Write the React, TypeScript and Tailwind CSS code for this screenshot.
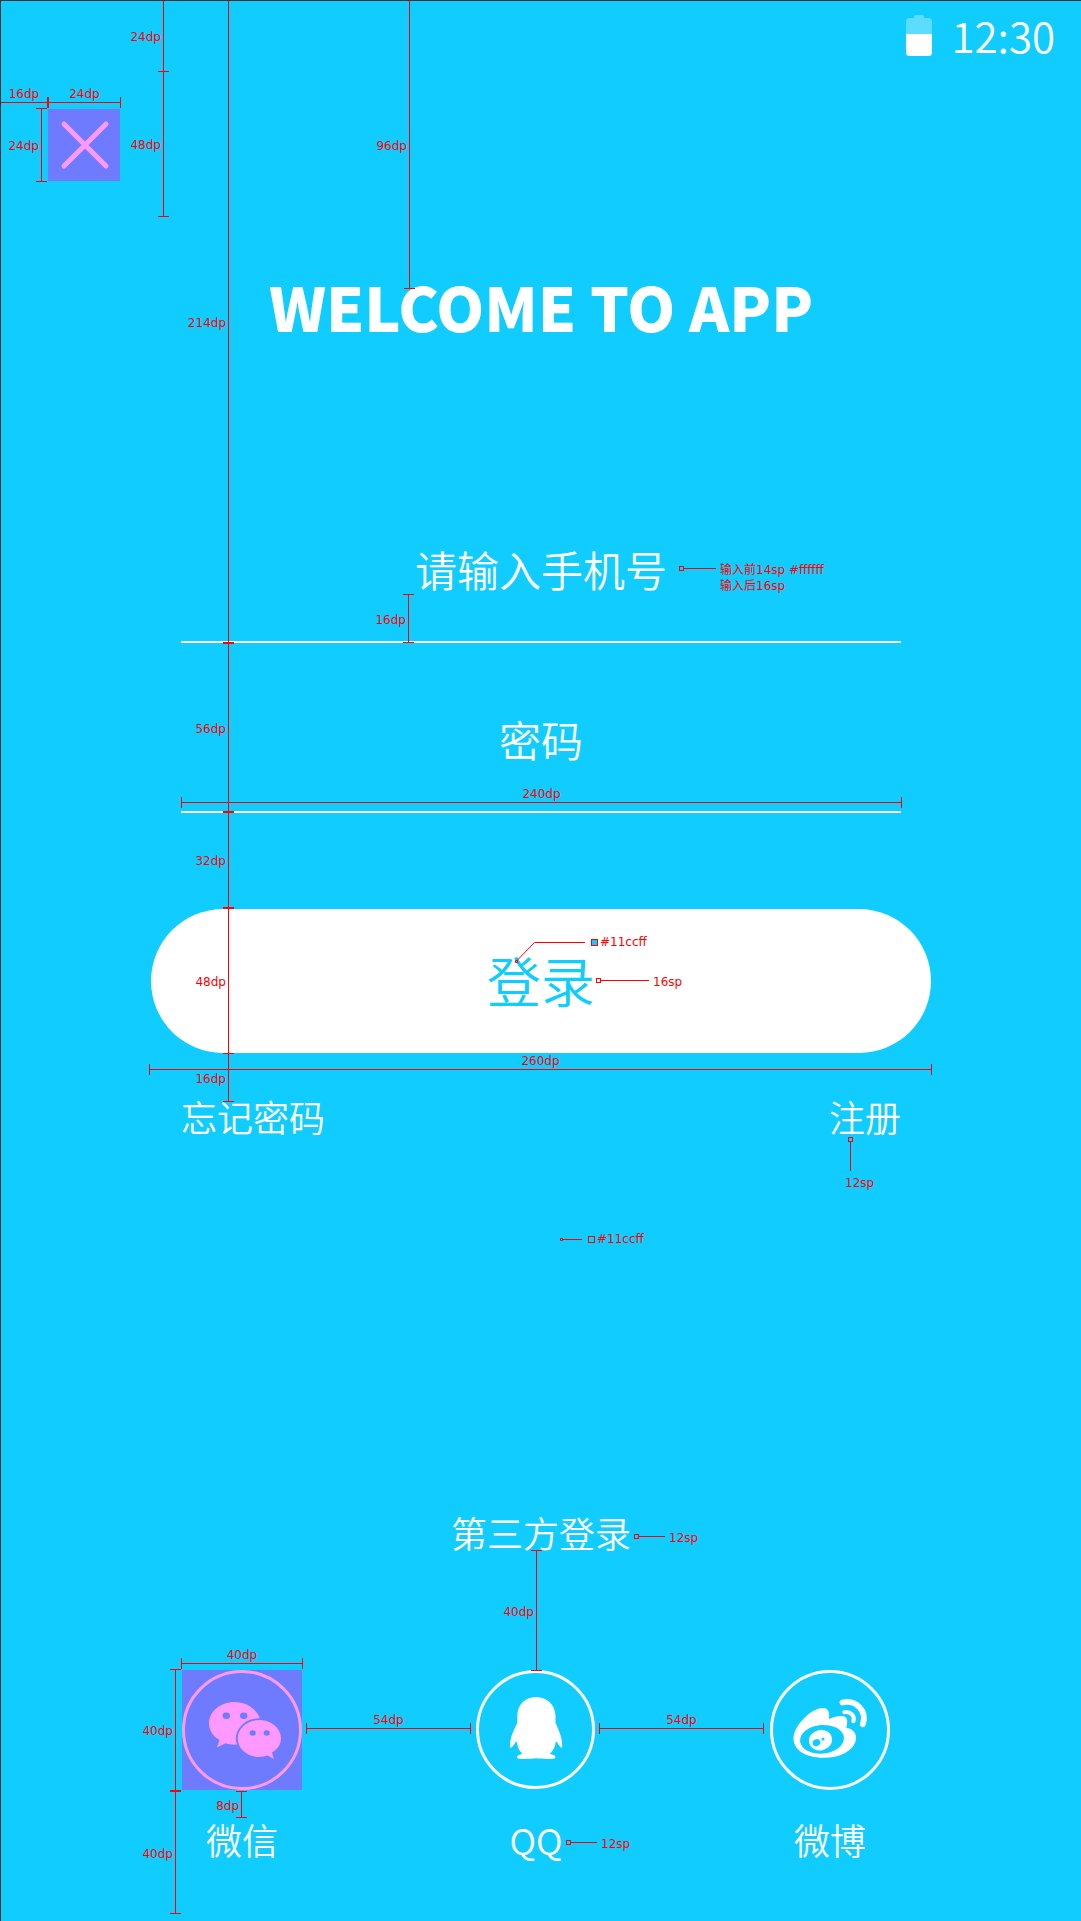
import type { ReactNode } from "react";

type SpanProps = { place: string; label: string };

/** Vertical measure with end ticks and its label on the left. */
function VSpan({ place, label }: SpanProps) {
  return (
    <div className={`absolute flex w-[11px] items-center justify-center border-y border-[#f00] ${place}`}>
      <span className="h-full w-px bg-[#f00]" />
      <span className="absolute right-2 pt-0.5">{label}</span>
    </div>
  );
}

/** Horizontal measure with end ticks and its label above. */
function HSpan({ place, label }: SpanProps) {
  return (
    <div className={`absolute flex h-[11px] items-center justify-center border-x border-[#f00] ${place}`}>
      <span className="h-px w-full bg-[#f00]" />
      <span className="absolute bottom-1.5">{label}</span>
    </div>
  );
}

/** Note tied to an element by a small square and a leader line. */
function Note({ place, line, dot = "", children }: { place: string; line: string; dot?: string; children: ReactNode }) {
  return (
    <div className={`absolute flex items-start ${place}`}>
      <span className={`size-[5px] shrink-0 border border-[#f00] ${dot}`} />
      <span className={`mt-0.5 h-px shrink-0 bg-[#f00] ${line}`} />
      <span className="-mt-1 ml-1">{children}</span>
    </div>
  );
}

function Swatch({ place, children }: { place: string; children: ReactNode }) {
  return (
    <div className={`absolute flex items-center gap-0.5 ${place}`}>
      <span className="size-[7px] border border-[#f00] bg-[#11ccff]" />
      <span>{children}</span>
    </div>
  );
}

function Specs() {
  return (
    <div
      aria-hidden="true"
      className="pointer-events-none absolute inset-0 -top-px text-[12px] leading-4 font-normal whitespace-nowrap text-[#f00] [font-family:'DejaVu_Sans','Noto_Sans_CJK_SC',sans-serif]"
    >
      <div className="absolute inset-y-0 -left-px">
        <VSpan place="left-[158px] top-0 h-[72px]" label="24dp" />
        <VSpan place="left-[158px] top-[71px] h-[146px]" label="48dp" />
        <VSpan place="left-[36px] top-[108px] h-[74px]" label="24dp" />
        <HSpan place="left-0 top-[97px] w-[48px]" label="16dp" />
        <HSpan place="left-[48px] top-[97px] w-[73px]" label="24dp" />
      </div>
      <div className="absolute inset-y-0 left-1/2 w-[720px] -translate-x-1/2">
        <VSpan place="left-[42px] top-0 h-[643px]" label="214dp" />
        <VSpan place="left-[42px] top-[643px] h-[169px]" label="56dp" />
        <VSpan place="left-[42px] top-[812px] h-[96px]" label="32dp" />
        <VSpan place="left-[42px] top-[908px] h-[146px]" label="48dp" />
        <VSpan place="left-[42px] top-[1053px] h-[49px]" label="16dp" />
        <VSpan place="left-[223px] top-0 h-[289px]" label="96dp" />
        <VSpan place="left-[222px] top-[594px] h-[49px]" label="16dp" />
        <VSpan place="-left-[11px] top-[1669px] h-[122px]" label="40dp" />
        <VSpan place="-left-[11px] top-[1791px] h-[123px]" label="40dp" />
        <VSpan place="left-[55px] top-[1791px] h-[27px]" label="8dp" />
        <VSpan place="left-[350px] top-[1550px] h-[121px]" label="40dp" />

        <HSpan place="left-0 top-[797px] w-[721px]" label="240dp" />
        <HSpan place="-left-[32px] top-[1064px] w-[783px]" label="260dp" />
        <HSpan place="left-0 top-[1658px] w-[122px]" label="40dp" />
        <HSpan place="left-[125px] top-[1723px] w-[165px]" label="54dp" />
        <HSpan place="left-[418px] top-[1723px] w-[165px]" label="54dp" />

        <Note place="left-[498px] top-[566px]" line="w-[32px]">
          输入前14sp #ffffff
          <br />
          输入后16sp
        </Note>
        <Note place="left-[415px] top-[978px]" line="w-[48px]" dot="bg-white">
          16sp
        </Note>
        <Note place="left-[453px] top-[1534px]" line="w-[26px]">
          12sp
        </Note>
        <Note place="left-[385px] top-[1840px]" line="w-[26px]">
          12sp
        </Note>
        <div className="absolute top-[1137px] left-[664px] flex flex-col items-start">
          <span className="ml-[3px] size-[5px] border border-[#f00]" />
          <span className="ml-[5px] h-[29px] w-px bg-[#f00]" />
          <span className="mt-1">12sp</span>
        </div>

        <svg className="absolute top-[940px] left-[332px]" width="76" height="26" fill="none" stroke="#f00">
          <path d="M4 20.5L21.5 2.5H72" />
          <path d="M2.5 20.5h2v2h-2z" fill="#11ccff" />
        </svg>
        <Swatch place="left-[410px] top-[934px]">#11ccff</Swatch>
        <svg className="absolute top-[1236px] left-[377px]" width="26" height="8" fill="none" stroke="#f00">
          <path d="M4 3.5H24" />
          <path d="M2.5 2.5h2v2h-2z" />
        </svg>
        <Swatch place="left-[407px] top-[1231px]">#11ccff</Swatch>
      </div>
    </div>
  );
}

function WechatIcon() {
  return (
    <svg viewBox="0 0 120 120" className="size-full" fill="#ff99ff">
      <circle cx="60" cy="60" r="58.5" fill="none" stroke="#ff99ff" strokeWidth="3" />
      <path d="M52.5 32C38.400 32 27 41.500 27 53.500C27 60.500 31 66.500 37.500 70L35 77.500L43.500 73.300C49 75 53 74.700 56 74.500L78.500 50.500C76 40 65.500 32 52.500 32Z" />
      <ellipse cx="77.300" cy="68.500" rx="23.500" ry="20.300" fill="#6f7bff" />
      <path d="M77.300 50C65.300 50 55.700 58.300 55.700 68.500S65.300 87 77.300 87C80.500 87 83.200 86.400 85.500 85.600L91.900 89L90 82.600C95.500 79.400 99 74.300 99 68.500C99 58.300 89.300 50 77.300 50Z" />
      <g fill="#6f7bff">
        <ellipse cx="44.300" cy="45.700" rx="3.700" ry="3.300" />
        <ellipse cx="61.700" cy="45.700" rx="3.700" ry="3.300" />
        <ellipse cx="70.700" cy="63" rx="3.100" ry="2.700" />
        <ellipse cx="84.700" cy="63" rx="3.100" ry="2.700" />
      </g>
    </svg>
  );
}

function QqIcon() {
  return (
    <svg viewBox="0 0 120 120" className="size-full" fill="#fff">
      <circle cx="59.500" cy="59.500" r="58" fill="none" stroke="#fff" strokeWidth="3" />
      <path d="M60 27C48.500 27 41.300 35.500 41.300 46V53C37 61 34 69 34 75C34 77.500 34.700 78.500 36 77C37.500 75.500 38.700 73.500 39.700 72H41C41.300 77 43.300 81 46.500 84C43 84.500 41 85.700 41 87C41 88.300 42.500 88.900 45 88.900C51 89 56 88.800 60 88.300C64 88.800 69 89 75 88.900C77.500 88.900 79.500 88.300 79.500 87C79.500 85.700 77.500 84.500 73.800 84C77 81 79.300 77 79.700 72H81C82 73.500 83 75.500 84.500 77C85.500 78.500 86.200 77.500 86.200 75C86.200 69 83.500 61 79.500 53V46C79.300 35.500 71.500 27 60 27Z" />
    </svg>
  );
}

function WeiboIcon() {
  return (
    <svg viewBox="0 0 120 120" className="size-full" fill="#fff">
      <circle cx="60" cy="60" r="58.500" fill="none" stroke="#fff" strokeWidth="3" />
      <path d="M23.500 67.500C23.800 59 32 49 40 43C45 39.200 50 37.800 53.500 38C58.500 38.400 59.700 42.500 59 49C64 46.500 69 45.700 72.500 46C77.500 46.800 78.300 51 76.200 57.500C82.500 59 86 62.500 86 67.500C86 74 81.500 79.500 75 83C68.500 86.500 61 87.900 53 87.800C36 87.500 23 80.500 23.500 67.500Z" />
      <ellipse cx="52" cy="69.300" rx="22" ry="14.300" fill="#11ccff" transform="rotate(-5 52 69.300)" />
      <ellipse cx="50.500" cy="70.200" rx="11.600" ry="10.300" transform="rotate(-12 50.500 70.200)" />
      <g fill="#11ccff">
        <ellipse cx="46.500" cy="72.700" rx="4" ry="3.400" transform="rotate(-25 46.500 72.700)" />
        <circle cx="53" cy="69" r="1.500" />
      </g>
      <g fill="none" stroke="#fff" strokeLinecap="round">
        <path d="M72.500 32.500C86 29.500 97.500 41 92.800 54.300" strokeWidth="5.800" />
        <path d="M74.300 42.200C80.500 41 85.500 46 83.300 51.300" strokeWidth="4" />
      </g>
    </svg>
  );
}

function Battery() {
  return (
    <svg width="26" height="41" viewBox="0 0 26 41" aria-label="Battery" role="img">
      <path d="M8 3V1.500Q8 0 9.500 0H16.500Q18 0 18 1.500V3H22.500Q26 3 26 6.500V19H0V6.500Q0 3 3.500 3Z" fill="#5cdcff" />
      <path d="M0 19H26V37.500Q26 41 22.500 41H3.500Q0 41 0 37.500Z" fill="#fff" />
    </svg>
  );
}

function Field({ label, type }: { label: string; type: string }) {
  return (
    <input
      type={type}
      aria-label={label}
      placeholder={label}
      className="block h-[170px] w-full border-b-2 border-white bg-transparent pt-[22px] text-center text-[42px] font-[350] text-white outline-none placeholder:text-white placeholder:opacity-100"
    />
  );
}

const providers = [
  { name: "微信", icon: <WechatIcon />, box: "bg-[#6f7bff]" },
  { name: "QQ", icon: <QqIcon />, box: "" },
  { name: "微博", icon: <WeiboIcon />, box: "" },
];

export default function App() {
  return (
    <div className="relative flex min-h-screen flex-col overflow-hidden border-t border-l border-[#333] bg-[#11ccff] font-[350] text-white [font-family:'Noto_Sans_CJK_SC',sans-serif]">
      <header>
        <div className="flex h-[72px] items-center justify-end gap-[19px] pr-[26px] pb-1 text-[42px] leading-none">
          <Battery />
          <time>12:30</time>
        </div>
        <div className="flex h-[144px] items-center pl-[47px]">
          <button type="button" aria-label="Close" className="size-[72px] bg-[#6f7bff]">
            <svg viewBox="0 0 72 72" className="size-full" stroke="#ff99ff" strokeWidth="5" strokeLinecap="round">
              <path d="M16 15L58 57M58 15L16 57" />
            </svg>
          </button>
        </div>
      </header>

      <main className="mx-auto flex w-[720px] max-w-full flex-col">
        <h1 className="mt-[53px] mb-[131px] text-center text-[61px] leading-[72px] font-black">WELCOME TO APP</h1>
        <form onSubmit={(e) => e.preventDefault()}>
          <Field label="请输入手机号" type="tel" />
          <Field label="密码" type="password" />
          <div className="-mx-[30px] mt-24 flex">
            <button type="submit" className="h-36 flex-1 rounded-full bg-white pb-1 text-[54px] text-[#11ccff]">
              登录
            </button>
          </div>
        </form>
        <nav className="mt-[39px] flex justify-between text-[36px] leading-[48px]">
          <a href="#forgot">忘记密码</a>
          <a href="#register">注册</a>
        </nav>
        <h2 className="mt-[368px] text-center text-[36px] leading-[48px]">第三方登录</h2>
        <div className="mt-[114px] flex justify-between pr-[11px] pb-[58px] pl-px">
          {providers.map((p) => (
            <button key={p.name} type="button" className="flex flex-col items-center gap-[25px] text-[36px] leading-[48px]">
              <span className={`size-[120px] ${p.box}`}>{p.icon}</span>
              <span>{p.name}</span>
            </button>
          ))}
        </div>
      </main>

      <Specs />
    </div>
  );
}
